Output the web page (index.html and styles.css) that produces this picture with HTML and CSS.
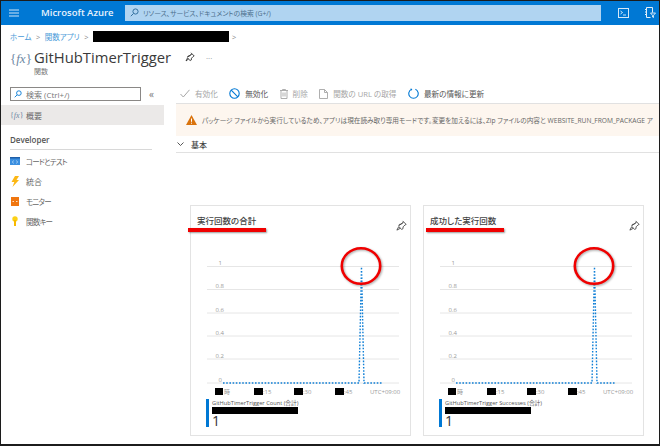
FILE: index.html
```html
<!DOCTYPE html>
<html lang="ja">
<head>
    <meta charset="UTF-8">
    <title>GitHubTimerTrigger - Microsoft Azure</title>
    <link rel="stylesheet" href="styles.css">
</head>
<body>
<div class="window">
    <header class="topbar">
        <svg class="menu-icon" width="10" height="8" viewBox="0 0 10 8"><path d="M0 1h10M0 4h10M0 7h10" stroke="#cfe4f7" stroke-width="1"/></svg>
        <span class="brand">Microsoft Azure</span>
        <div class="top-search">
            <svg width="9" height="9" viewBox="0 0 9 9"><circle cx="5.5" cy="3.5" r="2.6" fill="none" stroke="#33719f"/><path d="M3.5 5.5L.8 8.2" stroke="#33719f"/></svg>
            <span>リソース、サービス、ドキュメントの検索 (G+/)</span>
        </div>
        <div class="top-icons">
            <svg width="11" height="10" viewBox="0 0 11 10"><rect x=".5" y=".5" width="10" height="9" fill="none" stroke="#d5e8f8"/><path d="M2.5 3l2 1.5-2 1.5M5 7h3" fill="none" stroke="#fff" stroke-width=".8"/></svg>
            <svg width="12" height="11" viewBox="0 0 12 11"><path d="M2.5 10.500V.5h6v5M2.500 10.500h4M1 2.500h1.500M1 5h1.500M1 7.500h1.500" fill="none" stroke="#e2eff9"/><path d="M6.500 6h5L9.500 8.300V10.500L8.500 10V8.300z" fill="none" stroke="#fff" stroke-width=".8"/></svg>
        </div>
    </header>

    <nav class="crumbs">
        <a>ホーム</a><i>&gt;</i><a>関数アプリ</a><i>&gt;</i><span class="redact"></span><i>&gt;</i>
    </nav>

    <div class="title-row">
        <span class="fx-logo">{<em>fx</em>}</span>
        <div>
            <div class="title-line">
                <h1>GitHubTimerTrigger</h1>
                <svg class="pin" width="10" height="10" viewBox="0 0 10 10"><path d="M6 .8l3.200 3.200-1 .5-1.700 1.700-.2 1.800-1.200.5L2.500 6 1 9l2.600-2.100M2.500 5.200l.6-1.200 1.800-.2 1.700-1.700z" fill="none" stroke="#333" stroke-width=".9"/></svg>
                <span class="dots">···</span>
            </div>
            <div class="subtitle">関数</div>
        </div>
    </div>

    <div class="page">
        <aside class="sidebar">
            <div class="side-search-row">
                <div class="side-search">
                    <svg width="8" height="8" viewBox="0 0 9 9"><circle cx="5.500" cy="3.500" r="2.600" fill="none" stroke="#0078d4"/><path d="M3.500 5.500L.8 8.200" stroke="#0078d4"/></svg>
                    <span>検索 (Ctrl+/)</span>
                </div>
                <span class="collapse">«</span>
            </div>
            <div class="side-item active"><span class="fx-small">{<em>fx</em>}</span>概要</div>
            <div class="side-head">Developer</div>
            <div class="side-item kana">
                <svg width="10" height="8" viewBox="0 0 10 8"><rect width="10" height="8" fill="#3b8fe0"/><rect width="10" height="1.500" fill="#1f5fa8"/><path d="M3.500 3.500L2.500 5l1 1.500M6.500 3.500l1 1.500-1 1.500" fill="none" stroke="#cfe6fa" stroke-width=".7"/></svg>
                コードとテスト
            </div>
            <div class="side-item">
                <svg width="10" height="11" viewBox="0 0 10 11"><path d="M5 0h4L6.500 4H9L2.500 11 4.300 6H1.500z" fill="#fcb714"/></svg>
                統合
            </div>
            <div class="side-item kana">
                <svg width="10" height="9" viewBox="0 0 10 9"><rect x="1" width="8" height="9" fill="#f0760f"/><path d="M2.500 4.500h1.500M6 4.500h1.500" stroke="#fde0c4" stroke-width="1.200"/></svg>
                モニター
            </div>
            <div class="side-item kana">
                <svg width="10" height="10" viewBox="0 0 10 10"><circle cx="5" cy="3" r="2.700" fill="#fcd116"/><rect x="4" y="4" width="2" height="6" fill="#f7b900"/></svg>
                関数キー
            </div>
        </aside>

        <main class="content">
            <div class="toolbar">
                <span class="tool off"><svg width="10" height="9" viewBox="0 0 10 9"><path d="M.5 5l2.800 3L9.500.8" fill="none" stroke="#a6a6a6"/></svg>有効化</span>
                <span class="tool"><svg width="11" height="11" viewBox="0 0 11 11"><circle cx="5.500" cy="5.500" r="4.700" fill="none" stroke="#0078d4" stroke-width="1.100"/><path d="M2.200 2.200l6.600 6.600" stroke="#0078d4" stroke-width="1.100"/></svg>無効化</span>
                <span class="tool off"><svg width="8" height="10" viewBox="0 0 8 10"><path d="M0 1.500h8M2.500 1.500V.5h3v1M1 1.500v8h6v-8M3 3.500v4M5 3.500v4" fill="none" stroke="#a6a6a6" stroke-width=".9"/></svg>削除</span>
                <span class="tool off"><svg width="9" height="10" viewBox="0 0 9 10"><path d="M.5.500h5l3 3v6h-8zM5.500.500v3h3" fill="none" stroke="#a6a6a6" stroke-width=".9"/></svg>関数の URL の取得</span>
                <span class="tool"><svg width="11" height="11" viewBox="0 0 11 11"><path d="M3.600 1.300a4.700 4.700 0 1 0 3.800 0" fill="none" stroke="#0078d4" stroke-width="1.100"/><path d="M2.600.2l1.800 1-1.300 1.600" fill="#0078d4"/></svg>最新の情報に更新</span>
            </div>

            <div class="notice">
                <svg width="11" height="10" viewBox="0 0 11 10"><path d="M5.500 0L11 10H0z" fill="#d9730d"/><path d="M5.500 3.500v3.300M5.500 7.700v1" stroke="#fff"/></svg>
                <span>パッケージ ファイルから実行しているため、アプリは現在読み取り専用モードです。変更を加えるには、Zip ファイルの内容と WEBSITE_RUN_FROM_PACKAGE ア</span>
            </div>

            <div class="section-head">
                <svg width="7" height="4" viewBox="0 0 7 4"><path d="M.5.500l3 3 3-3" fill="none" stroke="#444" stroke-width=".9"/></svg>
                基本
            </div>

            <div class="cards">
                <section class="card">
                    <div class="card-head">
                        <h2>実行回数の合計</h2>
                        <svg width="11" height="11" viewBox="0 0 10 10"><path d="M6 .8l3.200 3.200-1 .5-1.700 1.700-.2 1.800-1.200.5L2.500 6 .8 9.200 4 7.500M2.500 5.200l.6-1.200 1.800-.2 1.700-1.700z" fill="none" stroke="#444" stroke-width=".8"/></svg>
                    </div>
                    <span class="mark-line"></span>
                    <svg class="mark-ring" width="48" height="46" viewBox="0 0 48 46"><ellipse cx="24" cy="23" rx="19.200" ry="17.800" fill="none" stroke="#f00000" stroke-width="2.600"/></svg>
                    <svg class="chart" width="220" height="144" viewBox="0 0 220 144">
                        <path class="grid" d="M16 11.500h192M16 34.500h192M16 58h192M16 81h192M16 104h192M16 128h192"/>
                        <text class="tick" x="31" y="10" text-anchor="end">1</text>
                        <text class="tick" x="33" y="33" text-anchor="end">0.8</text>
                        <text class="tick" x="33" y="57" text-anchor="end">0.6</text>
                        <text class="tick" x="33" y="80" text-anchor="end">0.4</text>
                        <text class="tick" x="33" y="103" text-anchor="end">0.2</text>
                        <text class="tick" x="31" y="127" text-anchor="end">0</text>
                        <path class="line" d="M32 128H168L170.500 12L173 128H192"/>
                        <rect x="24" y="133" width="8" height="7"/><rect x="63" y="133" width="9" height="7"/><rect x="103" y="133" width="9" height="7"/><rect x="144" y="133" width="9" height="7"/>
                        <text class="tick" x="33" y="139">時</text>
                        <text class="tick" x="72" y="139">:15</text>
                        <text class="tick" x="112" y="139">:30</text>
                        <text class="tick" x="153" y="139">:45</text>
                        <text class="tick" x="179" y="139">UTC+09:00</text>
                    </svg>
                    <div class="legend">
                        <div class="legend-name">GitHubTimerTrigger Count (合計)</div>
                        <div class="legend-redact"></div>
                        <div class="legend-value">1</div>
                    </div>
                </section>

                <section class="card">
                    <div class="card-head">
                        <h2>成功した実行回数</h2>
                        <svg width="11" height="11" viewBox="0 0 10 10"><path d="M6 .8l3.200 3.200-1 .5-1.700 1.700-.2 1.800-1.200.5L2.500 6 .8 9.200 4 7.500M2.500 5.200l.6-1.200 1.800-.2 1.700-1.700z" fill="none" stroke="#444" stroke-width=".8"/></svg>
                    </div>
                    <span class="mark-line"></span>
                    <svg class="mark-ring" width="48" height="46" viewBox="0 0 48 46"><ellipse cx="24" cy="23" rx="19.200" ry="17.800" fill="none" stroke="#f00000" stroke-width="2.600"/></svg>
                    <svg class="chart" width="220" height="144" viewBox="0 0 220 144">
                        <path class="grid" d="M16 11.500h192M16 34.500h192M16 58h192M16 81h192M16 104h192M16 128h192"/>
                        <text class="tick" x="31" y="10" text-anchor="end">1</text>
                        <text class="tick" x="33" y="33" text-anchor="end">0.8</text>
                        <text class="tick" x="33" y="57" text-anchor="end">0.6</text>
                        <text class="tick" x="33" y="80" text-anchor="end">0.4</text>
                        <text class="tick" x="33" y="103" text-anchor="end">0.2</text>
                        <text class="tick" x="31" y="127" text-anchor="end">0</text>
                        <path class="line" d="M32 128H168L170.500 12L173 128H192"/>
                        <rect x="24" y="133" width="8" height="7"/><rect x="63" y="133" width="9" height="7"/><rect x="103" y="133" width="9" height="7"/><rect x="144" y="133" width="9" height="7"/>
                        <text class="tick" x="33" y="139">時</text>
                        <text class="tick" x="72" y="139">:15</text>
                        <text class="tick" x="112" y="139">:30</text>
                        <text class="tick" x="153" y="139">:45</text>
                        <text class="tick" x="179" y="139">UTC+09:00</text>
                    </svg>
                    <div class="legend">
                        <div class="legend-name">GitHubTimerTrigger Successes (合計)</div>
                        <div class="legend-redact"></div>
                        <div class="legend-value">1</div>
                    </div>
                </section>
            </div>
        </main>
    </div>
</div>
</body>
</html>
```

FILE: styles.css
```css
* {
    box-sizing: border-box;
}
body {
    margin: 0;
    font-family: 'Open Sans', 'Noto Sans CJK JP', sans-serif;
    font-feature-settings: "palt";
    color: #555;
    background: #fff;
}
.window {
    width: 660px;
    height: 446px;
    border: 1px solid #1c1c1c;
    border-bottom-width: 2px;
    overflow: hidden;
    display: flex;
    flex-direction: column;
}

/* top bar */
.topbar {
    height: 24px;
    flex: none;
    background: #0078d4;
    display: flex;
    align-items: center;
    padding-bottom: 1px;
}
.menu-icon {
    margin-left: 8px;
}
.brand {
    margin-left: 22px;
    width: 84px;
    font-size: 9.5px;
    font-weight: 600;
    color: #e8f3fc;
    white-space: nowrap;
}
.top-search {
    width: 476px;
    height: 16px;
    background: #b0d4f1;
    display: flex;
    align-items: center;
    gap: 4px;
    padding-left: 5px;
    font-size: 6.8px;
    color: #4d6f8c;
}
.top-icons {
    display: flex;
    align-items: center;
    gap: 15px;
    margin-left: 17px;
}

/* breadcrumb + title */
.crumbs {
    height: 23px;
    flex: none;
    display: flex;
    align-items: center;
    padding-left: 9px;
    font-size: 7.5px;
}
.crumbs a {
    color: #4a9ad8;
}
.crumbs i {
    font-style: normal;
    color: #888;
    margin: 0 4.5px;
}
.redact {
    width: 136px;
    height: 11px;
    background: #000;
}
.crumbs i:last-child {
    margin-left: 3px;
}
.title-row {
    height: 36px;
    flex: none;
    display: flex;
    padding-left: 9px;
}
.fx-logo {
    width: 24px;
    margin-top: 3px;
    font-family: 'Liberation Serif', serif;
    font-size: 13px;
    color: #6d87a3;
    white-space: nowrap;
}
.title-line {
    display: flex;
    align-items: center;
    height: 18px;
}
h1 {
    margin: 0;
    width: 151px;
    font-size: 14.8px;
    font-weight: 400;
    color: #3a3a3a;
    white-space: nowrap;
}
.pin {
    margin-right: 11px;
}
.dots {
    font-size: 8px;
    color: #888;
}
.subtitle {
    font-size: 7px;
    color: #777;
}

/* sidebar */
.page {
    flex: 1;
    display: flex;
    min-height: 0;
}
.sidebar {
    width: 163px;
    flex: none;
    padding-top: 3px;
}
.side-search-row {
    display: flex;
    align-items: center;
    padding-left: 9px;
    margin-bottom: 4px;
}
.side-search {
    width: 131px;
    height: 14px;
    border: 1px solid #8a8886;
    display: flex;
    align-items: center;
    gap: 4px;
    padding-left: 3px;
    font-size: 8px;
    color: #777;
}
.collapse {
    margin-left: 8px;
    font-size: 10px;
    line-height: 10px;
    color: #777;
}
.side-item {
    height: 20px;
    display: flex;
    align-items: center;
    padding-left: 9px;
    font-size: 8px;
    color: #666;
}
.side-item.kana {
    font-size: 7.5px;
    letter-spacing: -0.8px;
}
.side-item svg {
    width: 10px;
    margin-right: 6px;
}
.side-item.active {
    background: #ebe9e8;
    margin-bottom: 8px;
}
.fx-small {
    width: 16px;
    font-family: 'Liberation Serif', serif;
    font-size: 8px;
    color: #6d87a3;
}
.side-head {
    margin: 0 12px 1px 9px;
    height: 17px;
    line-height: 14px;
    font-size: 8px;
    font-weight: 600;
    color: #555;
    border-bottom: 1px solid #d8d8d8;
}

/* main */
.content {
    flex: 1;
    min-width: 0;
    margin-left: 12px;
}
.toolbar {
    height: 20px;
    display: flex;
    align-items: center;
    gap: 11.5px;
    padding-left: 4px;
    border-bottom: 1px solid #e1e1e1;
    font-size: 7.6px;
    white-space: nowrap;
}
.tool {
    display: flex;
    align-items: center;
    gap: 5px;
    color: #555;
}
.tool.off {
    color: #a6a6a6;
}
.notice {
    height: 32px;
    background: #fdf6ef;
    display: flex;
    align-items: center;
    gap: 5px;
    padding-left: 10px;
    font-size: 6.65px;
    color: #666;
    white-space: nowrap;
    overflow: hidden;
}
.notice svg {
    flex: none;
}
.section-head {
    height: 17px;
    display: flex;
    align-items: center;
    gap: 7px;
    padding-left: 1px;
    border-bottom: 1px solid #e1e1e1;
    font-size: 8px;
    font-weight: 500;
    color: #444;
}
.cards {
    display: flex;
    gap: 12px;
    margin: 52px 0 0 14px;
}
.card {
    position: relative;
    width: 221px;
    height: 231px;
    border: 1px solid #e3e3e3;
    flex: none;
}
.card-head {
    height: 49px;
    display: flex;
    justify-content: space-between;
    padding: 9px 3px 0 6px;
}
.card-head svg {
    margin-top: 5px;
}
h2 {
    margin: 0;
    font-size: 8.5px;
    font-weight: 500;
    line-height: 12px;
    color: #444;
}

/* red marks drawn over the screenshot */
.mark-line {
    position: absolute;
    left: -3px;
    top: 22px;
    width: 78px;
    height: 4px;
    background: #f00000;
    box-shadow: 1px 1px 2px rgba(0, 0, 0, 0.4);
}
.card + .card .mark-line {
    left: 2px;
}
.mark-ring {
    position: absolute;
    left: 146px;
    top: 37px;
    filter: drop-shadow(1px 1px 1px rgba(0, 0, 0, 0.35));
}

/* charts */
.chart {
    display: block;
}
.grid {
    stroke: #e6e6e6;
    stroke-width: 1;
    fill: none;
}
.tick {
    font-size: 6px;
    fill: #9a9a9a;
}
.line {
    fill: none;
    stroke: #0f7fd6;
    stroke-width: 1.4;
    stroke-dasharray: 1.6 1.6;
}
.legend {
    margin-left: 15px;
    width: 190px;
    height: 28px;
    border-left: 3px solid #0078d4;
    padding-left: 3px;
}
.legend-name {
    font-size: 5.7px;
    line-height: 8px;
    color: #555;
    white-space: nowrap;
}
.legend-redact {
    width: 86px;
    height: 7px;
    background: #000;
}
.legend-value {
    font-size: 14px;
    line-height: 14px;
    color: #333;
}
```
